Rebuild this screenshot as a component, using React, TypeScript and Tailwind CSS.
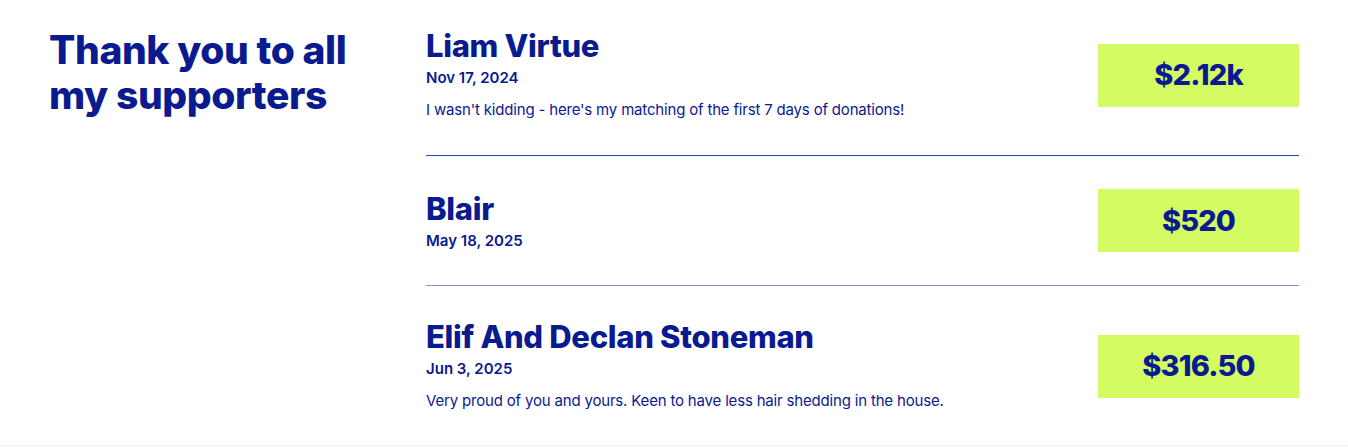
const supporters = [
  {
    name: 'Liam Virtue',
    date: 'Nov 17, 2024',
    message: "I wasn't kidding - here's my matching of the first 7 days of donations!",
    amount: '$2.12k',
    line: 'border-[#2840b8]',
  },
  {
    name: 'Blair',
    date: 'May 18, 2025',
    amount: '$520',
    line: 'border-[#8890d4]',
  },
  {
    name: 'Elif And Declan Stoneman',
    date: 'Jun 3, 2025',
    message: 'Very proud of you and yours. Keen to have less hair shedding in the house.',
    amount: '$316.50',
    line: 'border-transparent',
  },
]

export default function App() {
  return (
    <div className="min-h-[447px] bg-white font-['Inter',sans-serif] text-[#0a1a8f]">
      <section className="flex h-[446px] border-b border-[#f1f1f1] px-[49px]">
        <div className="w-[377px] shrink-0 pt-[27px]">
          <h2 className="max-w-[320px] text-[39px] font-extrabold leading-[45px] tracking-[-0.01em]">
            Thank you to all my supporters
          </h2>
        </div>

        <div className="flex-1">
          {supporters.map((s, i) => (
            <div
              key={s.name}
              className={`flex items-center justify-between border-b ${s.line} ${i === 0 ? 'pt-[28px] pb-[33px]' : 'py-[33px]'}`}
            >
              <div>
                <h3 className="text-[31px] font-extrabold leading-[36px] tracking-[-0.01em]">{s.name}</h3>
                <p className="mt-1 text-[15px] font-semibold leading-5">{s.date}</p>
                {s.message && (
                  <p className="mt-[10px] text-[15px] leading-6 tracking-[-0.012em]">{s.message}</p>
                )}
              </div>
              <div className="flex h-[63px] w-[201px] items-center justify-center bg-[#d4fc62] text-[29px] font-extrabold tracking-[-0.03em]">
                {s.amount}
              </div>
            </div>
          ))}
        </div>
      </section>
    </div>
  )
}
